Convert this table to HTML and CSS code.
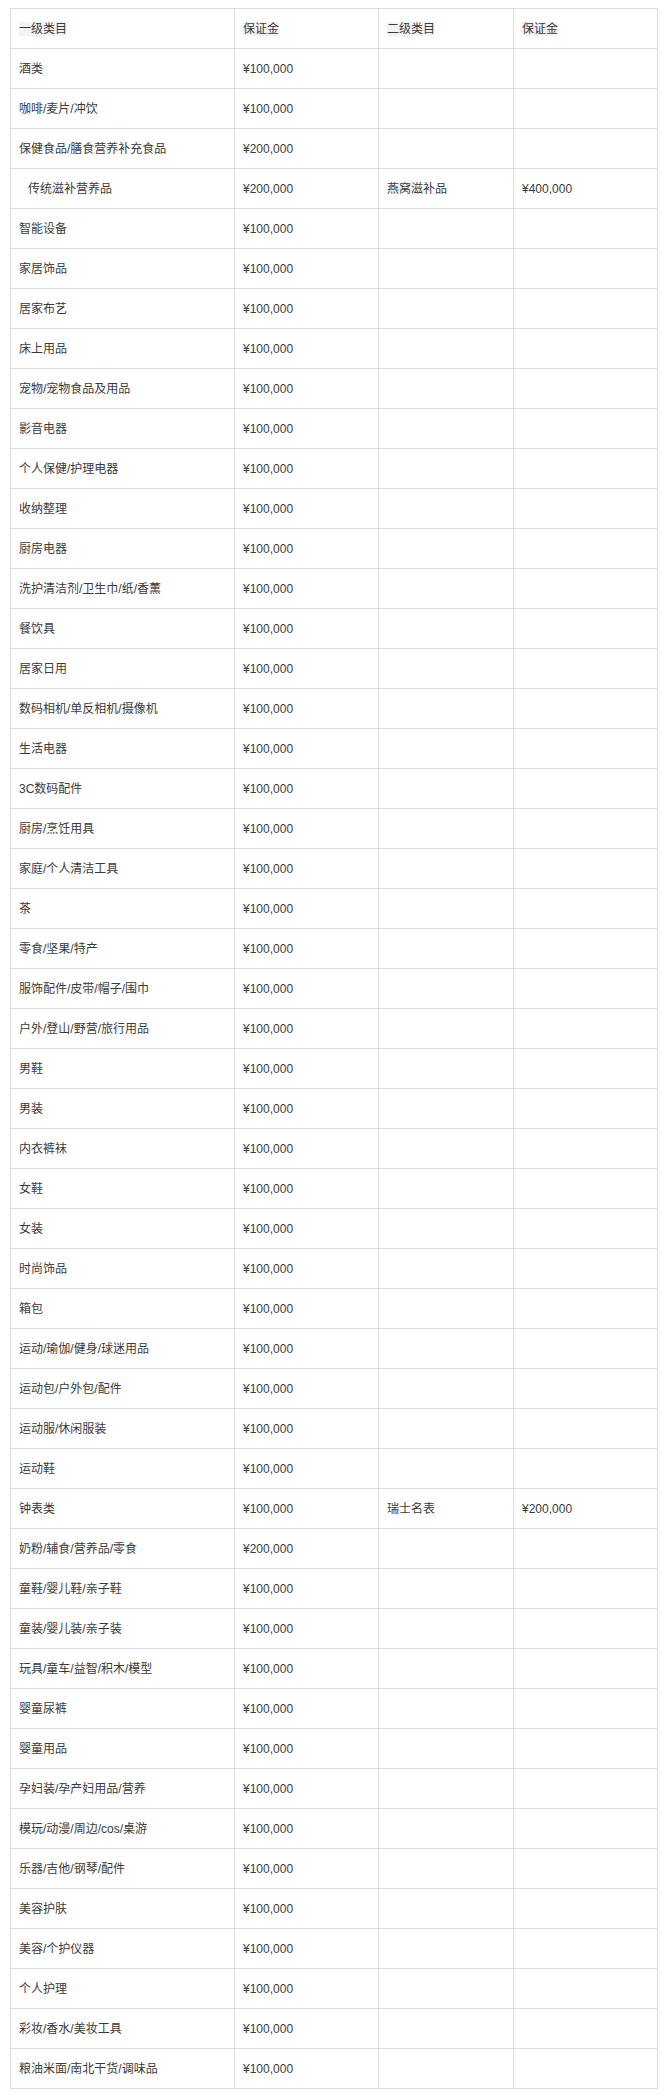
FILE: index.html
```html
<!DOCTYPE html>
<html lang="zh-CN">
<head>
<meta charset="utf-8">
<title>类目保证金</title>
<link rel="stylesheet" href="styles.css">
</head>
<body>
<table class="deposit">
<colgroup>
<col class="c1"><col class="c2"><col class="c3"><col class="c4">
</colgroup>
<thead>
<tr><th><span class="hl">一级类目</span></th><th><span class="hl">保证金</span></th><th><span class="hl">二级类目</span></th><th><span class="hl">保证金</span></th></tr>
</thead>
<tbody>
<tr><td>酒类</td><td>¥100,000</td><td></td><td></td></tr>
<tr><td>咖啡/麦片/冲饮</td><td>¥100,000</td><td></td><td></td></tr>
<tr><td>保健食品/膳食营养补充食品</td><td>¥200,000</td><td></td><td></td></tr>
<tr><td class="indent">传统滋补营养品</td><td>¥200,000</td><td>燕窝滋补品</td><td>¥400,000</td></tr>
<tr><td>智能设备</td><td>¥100,000</td><td></td><td></td></tr>
<tr><td>家居饰品</td><td>¥100,000</td><td></td><td></td></tr>
<tr><td>居家布艺</td><td>¥100,000</td><td></td><td></td></tr>
<tr><td>床上用品</td><td>¥100,000</td><td></td><td></td></tr>
<tr><td>宠物/宠物食品及用品</td><td>¥100,000</td><td></td><td></td></tr>
<tr><td>影音电器</td><td>¥100,000</td><td></td><td></td></tr>
<tr><td>个人保健/护理电器</td><td>¥100,000</td><td></td><td></td></tr>
<tr><td>收纳整理</td><td>¥100,000</td><td></td><td></td></tr>
<tr><td>厨房电器</td><td>¥100,000</td><td></td><td></td></tr>
<tr><td>洗护清洁剂/卫生巾/纸/香薰</td><td>¥100,000</td><td></td><td></td></tr>
<tr><td>餐饮具</td><td>¥100,000</td><td></td><td></td></tr>
<tr><td>居家日用</td><td>¥100,000</td><td></td><td></td></tr>
<tr><td>数码相机/单反相机/摄像机</td><td>¥100,000</td><td></td><td></td></tr>
<tr><td>生活电器</td><td>¥100,000</td><td></td><td></td></tr>
<tr><td>3C数码配件</td><td>¥100,000</td><td></td><td></td></tr>
<tr><td>厨房/烹饪用具</td><td>¥100,000</td><td></td><td></td></tr>
<tr><td>家庭/个人清洁工具</td><td>¥100,000</td><td></td><td></td></tr>
<tr><td>茶</td><td>¥100,000</td><td></td><td></td></tr>
<tr><td>零食/坚果/特产</td><td>¥100,000</td><td></td><td></td></tr>
<tr><td>服饰配件/皮带/帽子/围巾</td><td>¥100,000</td><td></td><td></td></tr>
<tr><td>户外/登山/野营/旅行用品</td><td>¥100,000</td><td></td><td></td></tr>
<tr><td>男鞋</td><td>¥100,000</td><td></td><td></td></tr>
<tr><td>男装</td><td>¥100,000</td><td></td><td></td></tr>
<tr><td>内衣裤袜</td><td>¥100,000</td><td></td><td></td></tr>
<tr><td>女鞋</td><td>¥100,000</td><td></td><td></td></tr>
<tr><td>女装</td><td>¥100,000</td><td></td><td></td></tr>
<tr><td>时尚饰品</td><td>¥100,000</td><td></td><td></td></tr>
<tr><td>箱包</td><td>¥100,000</td><td></td><td></td></tr>
<tr><td>运动/瑜伽/健身/球迷用品</td><td>¥100,000</td><td></td><td></td></tr>
<tr><td>运动包/户外包/配件</td><td>¥100,000</td><td></td><td></td></tr>
<tr><td>运动服/休闲服装</td><td>¥100,000</td><td></td><td></td></tr>
<tr><td>运动鞋</td><td>¥100,000</td><td></td><td></td></tr>
<tr><td>钟表类</td><td>¥100,000</td><td>瑞士名表</td><td>¥200,000</td></tr>
<tr><td>奶粉/辅食/营养品/零食</td><td>¥200,000</td><td></td><td></td></tr>
<tr><td>童鞋/婴儿鞋/亲子鞋</td><td>¥100,000</td><td></td><td></td></tr>
<tr><td>童装/婴儿装/亲子装</td><td>¥100,000</td><td></td><td></td></tr>
<tr><td>玩具/童车/益智/积木/模型</td><td>¥100,000</td><td></td><td></td></tr>
<tr><td>婴童尿裤</td><td>¥100,000</td><td></td><td></td></tr>
<tr><td>婴童用品</td><td>¥100,000</td><td></td><td></td></tr>
<tr><td>孕妇装/孕产妇用品/营养</td><td>¥100,000</td><td></td><td></td></tr>
<tr><td>模玩/动漫/周边/cos/桌游</td><td>¥100,000</td><td></td><td></td></tr>
<tr><td>乐器/吉他/钢琴/配件</td><td>¥100,000</td><td></td><td></td></tr>
<tr><td>美容护肤</td><td>¥100,000</td><td></td><td></td></tr>
<tr><td>美容/个护仪器</td><td>¥100,000</td><td></td><td></td></tr>
<tr><td>个人护理</td><td>¥100,000</td><td></td><td></td></tr>
<tr><td>彩妆/香水/美妆工具</td><td>¥100,000</td><td></td><td></td></tr>
<tr><td>粮油米面/南北干货/调味品</td><td>¥100,000</td><td></td><td></td></tr>
</tbody>
</table>
</body>
</html>
```

FILE: styles.css
```css
html, body {
  background: #ffffff;
}
body {
  margin: 8px 0 0 10px;
  font-family: "Liberation Sans", Arial, "Noto Sans CJK SC", sans-serif;
  font-size: 12px;
  color: #3a3a3a;
}
.deposit {
  border-collapse: collapse;
  table-layout: fixed;
  width: 648px;
}
.c1 { width: 224px; }
.c2 { width: 144px; }
.c3 { width: 135px; }
.c4 { width: 144px; }
.deposit th,
.deposit td {
  border: 1px solid #dddddd;
  height: 39px;
  padding: 0 8px;
  text-align: left;
  vertical-align: middle;
  font-weight: normal;
  white-space: nowrap;
  line-height: 16px;
}
.deposit td.indent {
  padding-left: 17px;
}
.hl {
  background: #f3f3f3;
}
```
